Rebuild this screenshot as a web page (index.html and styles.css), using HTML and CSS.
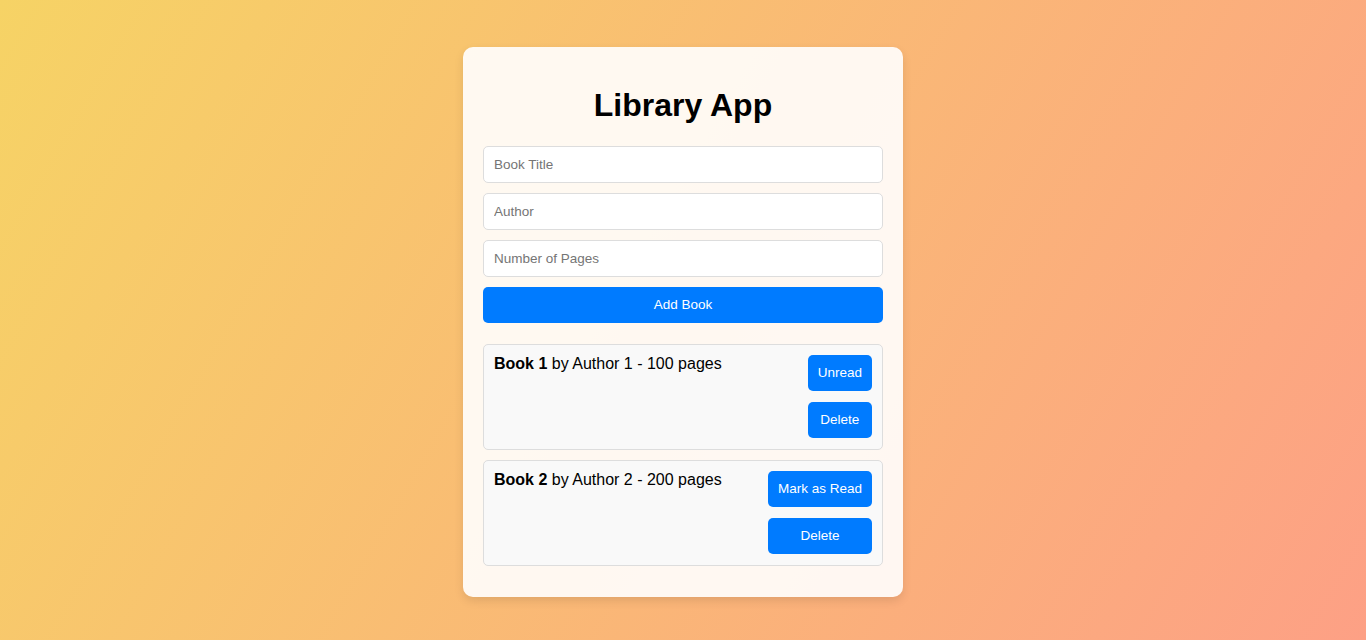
FILE: index.html
```html
<!DOCTYPE html>
<html lang="en">
<head>
<meta charset="UTF-8">
<title>Library App</title>
<link rel="stylesheet" href="styles.css">
</head>
<body>
  <div class="container">
    <h1 class="title">Library App</h1>
    <form class="book-form">
      <input class="field" type="text" placeholder="Book Title">
      <input class="field" type="text" placeholder="Author">
      <input class="field" type="number" placeholder="Number of Pages">
      <button class="btn btn-full" type="button">Add Book</button>
    </form>
    <ul class="book-list">
      <li class="book">
        <div class="book-info"><strong>Book 1</strong> by Author 1 - 100 pages</div>
        <div class="book-actions">
          <button class="btn" type="button">Unread</button>
          <button class="btn" type="button">Delete</button>
        </div>
      </li>
      <li class="book">
        <div class="book-info"><strong>Book 2</strong> by Author 2 - 200 pages</div>
        <div class="book-actions">
          <button class="btn" type="button">Mark as Read</button>
          <button class="btn" type="button">Delete</button>
        </div>
      </li>
    </ul>
  </div>
</body>
</html>
```

FILE: styles.css
```css
* {
  box-sizing: border-box;
}

html, body {
  height: 100%;
}

body {
  margin: 0;
  font-family: "Liberation Sans", Arial, sans-serif;
  background: linear-gradient(120deg, #f6d365 0%, #fda085 100%);
  display: flex;
  justify-content: center;
  align-items: flex-start;
  padding-top: 47px;
}

.container {
  width: 440px;
  background: rgba(255, 255, 255, 0.9);
  border-radius: 10px;
  box-shadow: 0 4px 10px rgba(0, 0, 0, 0.1);
  padding: 20px 20px 21px;
}

.title {
  text-align: center;
  font-size: 32px;
  font-weight: bold;
  color: #000;
  margin: 20px 0 22px;
  line-height: 37px;
}

.book-form {
  display: flex;
  flex-direction: column;
  gap: 10px;
}

.field {
  width: 100%;
  padding: 10px;
  border: 1px solid #ddd;
  border-radius: 5px;
  font-family: "Liberation Sans", Arial, sans-serif;
  font-size: 13.5px;
  line-height: 15px;
  height: 37px;
  background: #fff;
  color: #333;
}

.field::placeholder {
  color: #757575;
}

.field::-webkit-outer-spin-button,
.field::-webkit-inner-spin-button {
  -webkit-appearance: none;
  margin: 0;
}

.btn {
  background: #007bff;
  color: #fff;
  border: none;
  border-radius: 5px;
  padding: 10px;
  font-family: "Liberation Sans", Arial, sans-serif;
  font-size: 13.5px;
  line-height: 16px;
  cursor: pointer;
}

.btn-full {
  width: 100%;
  height: 36px;
}

.book-list {
  list-style: none;
  padding: 0;
  margin: 21px 0 0;
}

.book {
  display: flex;
  justify-content: space-between;
  align-items: flex-start;
  background: #f9f9f9;
  border: 1px solid #ddd;
  border-radius: 5px;
  padding: 10px 10px 11px;
  margin-bottom: 10px;
  font-size: 16px;
  color: #000;
}

.book-info {
  line-height: 18px;
}

.book-actions {
  display: flex;
  flex-direction: column;
  gap: 11px;
}

.book-actions .btn {
  height: 36px;
}
```
